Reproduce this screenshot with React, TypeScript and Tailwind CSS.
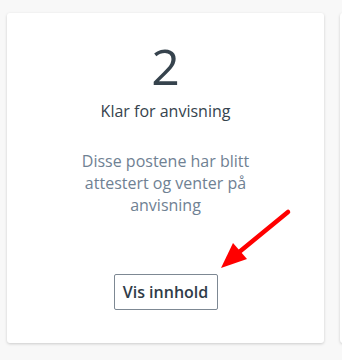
export default function App() {
  return (
    <div
      className="relative h-[360px] w-[342px] overflow-hidden bg-[#f8f8f8]"
      style={{ fontFamily: '"Open Sans", "Noto Sans", sans-serif' }}
    >
      <div className="flex gap-[16px] pl-[7px] pt-[13px]">
        <div className="flex h-[330px] w-[317px] shrink-0 flex-col items-center rounded-[3px] bg-white pt-[19px] shadow-[0_1px_3px_rgba(0,0,0,0.18)]">
          <p className="text-[50px] leading-[68px] text-[#36434d]">2</p>
          <p className="text-[16px] leading-[22px] text-[#36434d]">
            Klar for anvisning
          </p>
          <p className="mt-[28px] max-w-[180px] text-center text-[16px] leading-[22px] text-[#6f8193]">
            Disse postene har blitt attestert og venter på anvisning
          </p>
          <button className="mt-[58px] h-[36px] w-[104px] rounded-[2px] border border-[#7d8893] text-[16px] font-semibold text-[#2f3c48]">
            Vis innhold
          </button>
        </div>
        <div className="h-[330px] w-[317px] shrink-0 rounded-[3px] bg-white shadow-[0_1px_3px_rgba(0,0,0,0.18)]" />
      </div>

      {/* red pointer arrow */}
      <svg
        className="pointer-events-none absolute left-0 top-0"
        width="342"
        height="360"
        viewBox="0 0 342 360"
      >
        <line
          x1="288"
          y1="212"
          x2="238"
          y2="253"
          stroke="#ff0000"
          strokeWidth="4.5"
          strokeLinecap="round"
        />
        <polygon points="221,268 233,243 247,259" fill="#ff0000" />
      </svg>
    </div>
  );
}
